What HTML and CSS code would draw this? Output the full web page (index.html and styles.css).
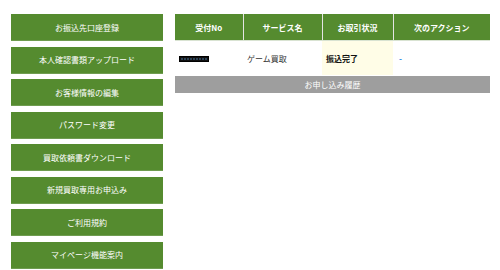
FILE: index.html
```html
<!DOCTYPE html>
<html lang="ja">
<head>
  <meta charset="UTF-8">
  <title>マイページ</title>
  <link rel="stylesheet" href="styles.css">
</head>
<body>

  <div class="page">
    <nav class="side-menu">
      <a href="#" class="menu-btn">お振込先口座登録</a>
      <a href="#" class="menu-btn">本人確認書類アップロード</a>
      <a href="#" class="menu-btn">お客様情報の編集</a>
      <a href="#" class="menu-btn">パスワード変更</a>
      <a href="#" class="menu-btn">買取依頼書ダウンロード</a>
      <a href="#" class="menu-btn">新規買取専用お申込み</a>
      <a href="#" class="menu-btn">ご利用規約</a>
      <a href="#" class="menu-btn">マイページ機能案内</a>
    </nav>

    <div class="main">
      <table class="order-table">
        <colgroup>
          <col class="col-no">
          <col class="col-service">
          <col class="col-status">
          <col class="col-action">
        </colgroup>
        <thead>
          <tr><th>受付No</th><th>サービス名</th><th>お取引状況</th><th>次のアクション</th></tr>
        </thead>
        <tbody>
          <tr>
            <td><span class="ticket-no"></span></td>
            <td>ゲーム買取</td>
            <td class="status">振込完了</td>
            <td><a href="#" class="action">-</a></td>
          </tr>
        </tbody>
      </table>
      <a href="#" class="history-btn">お申し込み履歴</a>
    </div>
  </div>

</body>
</html>
```

FILE: styles.css
```css
body {
  margin: 0;
  font-family: "Noto Sans CJK JP", "Noto Sans", sans-serif;
  font-size: 8px;
  background-color: #ffffff;
  color: #333;
}

.page {
  display: flex;
  gap: 12px;
  padding: 14px 10px 0 11px;
}

.side-menu {
  width: 152px;
  flex-shrink: 0;
  display: flex;
  flex-direction: column;
  gap: 5.5px;
}

.menu-btn {
  height: 26px;
  display: flex;
  align-items: center;
  justify-content: center;
  background-color: #558b2f;
  border-bottom: 1px solid #6f9c50;
  color: #ffffff;
  text-decoration: none;
}

.main {
  flex: 1;
}

.order-table {
  width: 100%;
  border-collapse: collapse;
  table-layout: fixed;
}

.col-no { width: 68px; }
.col-service { width: 79px; }
.col-status { width: 71px; }

.order-table th {
  height: 26px;
  padding: 0;
  background-color: #558b2f;
  color: #ffffff;
  font-weight: bold;
  text-align: center;
  border-bottom: 1px solid #d9e3d2;
}

.order-table th + th {
  border-left: 1px solid #e4e4e4;
}

.order-table td {
  height: 34px;
  padding: 0 4px;
  text-align: left;
  vertical-align: middle;
}

.ticket-no {
  display: inline-block;
  width: 30px;
  height: 6px;
  vertical-align: middle;
  background: #111 repeating-linear-gradient(90deg, #2c4256 0 2px, #111 2px 3px);
  background-size: 26px 2px;
  background-position: center;
  background-repeat: no-repeat;
  border: 1px solid #000;
  box-sizing: border-box;
}

.order-table td.status {
  background-color: #fffde7;
  color: #111;
  font-weight: bold;
}

.action {
  color: #1e88e5;
  font-weight: bold;
  text-decoration: none;
  padding-left: 2px;
}

.history-btn {
  display: flex;
  align-items: center;
  justify-content: center;
  height: 17px;
  margin-top: 1px;
  background-color: #9e9e9e;
  color: #ffffff;
  text-decoration: none;
}
```
